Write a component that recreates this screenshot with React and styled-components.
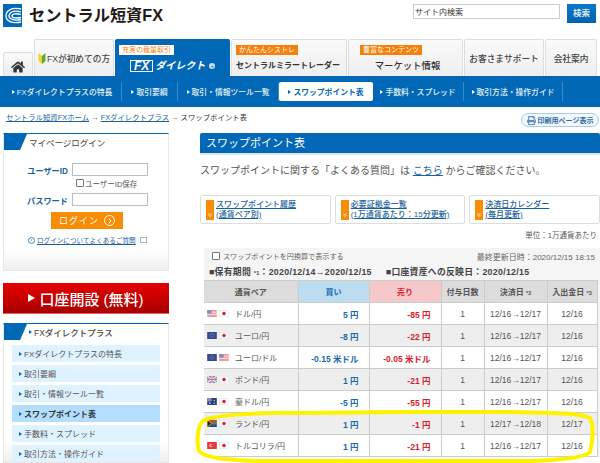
import React from "react";
import styled, { createGlobalStyle } from "styled-components";
import { FaHome, FaPrint } from "react-icons/fa";
import { ChevronRight, ChevronsDown } from "lucide-react";

const blue = "#0068b7";
const linkBlue = "#1a5f9e";
const font = `"Liberation Sans", "Noto Sans CJK JP", sans-serif`;

const Global = createGlobalStyle`
  html, body { margin: 0; padding: 0; background: #fff; overflow: hidden; }
  body { font-family: ${font}; color: #444; }
  * { box-sizing: border-box; }
  a { color: ${linkBlue}; }
`;

const navItems = [
  { label: "FXダイレクトプラスの特長", w: 119 },
  { label: "取引要綱", w: 56 },
  { label: "取引・情報ツール一覧", w: 101 },
  { label: "スワップポイント表", w: 94, active: true },
  { label: "手数料・スプレッド", w: 91 },
  { label: "取引方法・操作ガイド", w: 99 },
];

const sideItems = ["FXダイレクトプラスの特長", "取引要綱", "取引・情報ツール一覧", "スワップポイント表", "手数料・スプレッド", "取引方法・操作ガイド"];

const rows = [
  { flags: ["us", "jp"], pair: "ドル/円", buy: "5 円", sell: "-85 円", settle: "12/16→12/17", date: "12/16" },
  { flags: ["eu", "jp"], pair: "ユーロ/円", buy: "-8 円", sell: "-22 円", settle: "12/16→12/17", date: "12/16" },
  { flags: ["eu", "us"], pair: "ユーロ/ドル", buy: "-0.15 米ドル", sell: "-0.05 米ドル", settle: "12/16→12/17", date: "12/16" },
  { flags: ["gb", "jp"], pair: "ポンド/円", buy: "1 円", sell: "-21 円", settle: "12/16→12/17", date: "12/16" },
  { flags: ["au", "jp"], pair: "豪ドル/円", buy: "-5 円", sell: "-55 円", settle: "12/16→12/17", date: "12/16" },
  { flags: ["za", "jp"], pair: "ランド/円", buy: "1 円", sell: "-1 円", settle: "12/17→12/18", date: "12/17" },
  { flags: ["tr", "jp"], pair: "トルコリラ/円", buy: "1 円", sell: "-21 円", settle: "12/16→12/17", date: "12/16" },
];

const Flag = ({ code }) => (
  <FlagSvg viewBox="0 0 11 8">
    {code === "jp" && (
      <>
        <rect x="0.25" y="0.25" width="10.5" height="7.5" fill="#fafafa" stroke="#ddd" strokeWidth="0.5" />
        <circle cx="5.5" cy="4" r="2" fill="#d8202c" />
      </>
    )}
    {code === "us" && (
      <>
        <rect width="11" height="8" fill="#ee9a9a" />
        <rect y="2" width="11" height="1" fill="#fbeaea" />
        <rect y="4.5" width="11" height="1" fill="#fbeaea" />
        <rect width="5" height="4" fill="#7f8fc4" />
      </>
    )}
    {code === "eu" && (
      <>
        <rect width="11" height="8" fill="#35489c" />
        <circle cx="5.5" cy="4" r="2" fill="none" stroke="#9a9a60" strokeWidth="0.6" />
      </>
    )}
    {code === "gb" && (
      <>
        <rect width="11" height="8" fill="#7a8cc0" />
        <path d="M0 0L11 8M11 0L0 8" stroke="#eee" strokeWidth="1.4" />
        <path d="M5.5 0V8M0 4H11" stroke="#eee" strokeWidth="2" />
        <path d="M5.5 0V8M0 4H11" stroke="#d45a6a" strokeWidth="1" />
      </>
    )}
    {code === "au" && (
      <>
        <rect width="11" height="8" fill="#2c3f80" />
        <rect width="5" height="4" fill="#8a8fb8" />
        <circle cx="8" cy="3" r="0.7" fill="#eee" />
        <circle cx="8" cy="6" r="0.7" fill="#eee" />
        <circle cx="3" cy="6" r="0.9" fill="#eee" />
      </>
    )}
    {code === "za" && (
      <>
        <rect width="11" height="4" fill="#d0443c" />
        <rect y="4" width="11" height="4" fill="#2c4a9c" />
        <path d="M4 4H11" stroke="#3a9a50" strokeWidth="2" />
        <path d="M0 0L5 4L0 8Z" fill="#222" stroke="#e8c830" strokeWidth="0.8" />
      </>
    )}
    {code === "tr" && (
      <>
        <rect width="11" height="8" fill="#e8353a" />
        <circle cx="4.5" cy="4" r="2" fill="#fff" />
        <circle cx="5.1" cy="4" r="1.5" fill="#e8353a" />
      </>
    )}
  </FlagSvg>
);

const App = () => {
  return (
    <Page>
      <Global />
      <Header>
        <Logo>
          <LogoMark viewBox="0 0 19 23">
            <rect width="19" height="23" fill={blue} />
            <path d="M18 5C8 3 3 7 3 12C3 17 9 20 18 18" fill="none" stroke="#fff" strokeWidth="1.3" />
            <path d="M18 8C11 6 6 8 6 12C6 15 11 17 18 15.5" fill="none" stroke="#fff" strokeWidth="1.3" />
            <path d="M18 10.5C13 9 9 10 9 12C9 14 13 14.5 18 13.5" fill="none" stroke="#fff" strokeWidth="1.3" />
          </LogoMark>
          <LogoText>セントラル短資FX</LogoText>
        </Logo>
        <SearchBox>
          <SearchInput defaultValue="サイト内検索" />
          <SearchButton>検索</SearchButton>
        </SearchBox>
      </Header>

      <Tabs>
        <HomeTab>
          <FaHome size={14} color="#333" />
        </HomeTab>
        <Tab $w={80}>
          <Leaf viewBox="0 0 8 12">
            <path d="M4 12L0.5 9V1L4 4Z" fill="#f2d320" />
            <path d="M4 12L7.5 9V1L4 4Z" fill="#5aa83c" />
          </Leaf>
          FXが初めての方
        </Tab>
        <ActiveTab>
          <Badge $white>充実の裁量取引</Badge>
          <BrandRow>
            <BrandFx>FX</BrandFx>
            <BrandName>ダイレクト</BrandName>
            <BrandPlus>+</BrandPlus>
          </BrandRow>
        </ActiveTab>
        <StackTab $w={116}>
          <Badge>かんたんシストレ</Badge>
          <StackTitle $bold>セントラルミラートレーダー</StackTitle>
        </StackTab>
        <StackTab $w={115}>
          <Badge $indent={7}>豊富なコンテンツ</Badge>
          <StackTitle>マーケット情報</StackTitle>
        </StackTab>
        <Tab $w={80}>お客さまサポート</Tab>
        <Tab $w={52}>会社案内</Tab>
      </Tabs>

      <Nav>
        {navItems.map((item) => (
          <NavCell key={item.label} $w={item.w} $active={item.active}>
            <NavLabel $active={item.active}>
              <Arrow $color={item.active ? blue : "#fff"} />
              {item.label}
            </NavLabel>
          </NavCell>
        ))}
      </Nav>

      <Crumbs>
        <CrumbText>
          <a href="#home">セントラル短資FXホーム</a> → <a href="#fx">FXダイレクトプラス</a> → スワップポイント表
        </CrumbText>
        <PrintButton>
          <FaPrint size={9} color="#5a8fc0" />
          印刷用ページ表示
        </PrintButton>
      </Crumbs>

      <Columns>
        <Sidebar>
          <SideBox $h={138}>
            <SideHeading>
              <Corner />
              マイページログイン
            </SideHeading>
            <LoginRow>
              <LoginLabel>ユーザーID</LoginLabel>
              <LoginInput />
            </LoginRow>
            <SaveRow>
              <SaveBox />
              ユーザーID保存
            </SaveRow>
            <LoginRow>
              <LoginLabel>パスワード</LoginLabel>
              <LoginInput />
            </LoginRow>
            <LoginButton>
              ログイン
              <LoginCircle>
                <ChevronRight size={8} strokeWidth={3} />
              </LoginCircle>
            </LoginButton>
            <HelpRow>
              <HelpCircle>
                <ChevronRight size={6} strokeWidth={3} />
              </HelpCircle>
              <a href="#faq">ログインについてよくあるご質問</a>
              <Popup />
            </HelpRow>
          </SideBox>

          <OpenAccount>
            <OpenArrow />
            口座開設 (無料)
          </OpenAccount>

          <SideBox>
            <SideHeading $menu>
              <Corner />
              <Arrow $color={blue} />
              FXダイレクトプラス
            </SideHeading>
            <SideList>
              {sideItems.map((label, i) => (
                <SideItem key={label} $active={i === 3}>
                  <Arrow $color={blue} />
                  {label}
                </SideItem>
              ))}
            </SideList>
          </SideBox>
        </Sidebar>

        <Main>
          <Title>スワップポイント表</Title>
          <Intro>
            スワップポイントに関する「よくある質問」は <a href="#here">こちら</a> からご確認ください。
          </Intro>
          <Cards>
            <Card>
              <CardTag>
                <ChevronsDown size={6} strokeWidth={3} color="#fff" />
              </CardTag>
              <a href="#history">スワップポイント履歴<br />(通貨ペア別)</a>
            </Card>
            <Card>
              <CardTag>
                <ChevronsDown size={6} strokeWidth={3} color="#fff" />
              </CardTag>
              <a href="#margin">必要証拠金一覧<br />(1万通貨あたり：15分更新)</a>
            </Card>
            <Card>
              <CardTag>
                <ChevronsDown size={6} strokeWidth={3} color="#fff" />
              </CardTag>
              <a href="#calendar">決済日カレンダー<br />(毎月更新)</a>
            </Card>
          </Cards>
          <Unit>単位：1万通貨あたり</Unit>
          <TablePanel>
            <OptionRow>
              <YenCheck>
                <SaveBox />
                スワップポイントを円換算で表示する
              </YenCheck>
              <Updated>最終更新日時：2020/12/15 18:15</Updated>
            </OptionRow>
            <PeriodRow>
              <span>■保有期間 <Note>*1</Note>：2020/12/14→2020/12/15</span>
              <span>■口座資産への反映日：2020/12/15</span>
            </PeriodRow>
            <Table>
              <colgroup>
                <col style={{ width: 94 }} />
                <col style={{ width: 71 }} />
                <col style={{ width: 72 }} />
                <col style={{ width: 43 }} />
                <col style={{ width: 63 }} />
                <col style={{ width: 50 }} />
              </colgroup>
              <thead>
                <tr>
                  <Th>通貨ペア</Th>
                  <Th $bg="#bcdcf0" $color="#1a6ab0">買い</Th>
                  <Th $bg="#f6c8ca" $color="#d8202c">売り</Th>
                  <Th>付与日数</Th>
                  <Th>決済日 <Note>*2</Note></Th>
                  <Th>入出金日 <Note>*3</Note></Th>
                </tr>
              </thead>
              <tbody>
                {rows.map((row, i) => (
                  <Row key={row.pair} $even={i % 2 === 1}>
                    <PairCell>
                      <PairInner>
                        <FlagGroup>
                          {row.flags.map((code) => (
                            <Flag key={code} code={code} />
                          ))}
                        </FlagGroup>
                        {row.pair}
                      </PairInner>
                    </PairCell>
                    <ValueCell $color="#1a6ab0">{row.buy}</ValueCell>
                    <ValueCell $color="#d8202c">{row.sell}</ValueCell>
                    <Td>1</Td>
                    <Td>{row.settle}</Td>
                    <Td>{row.date}</Td>
                  </Row>
                ))}
              </tbody>
            </Table>
          </TablePanel>
        </Main>
      </Columns>

      <Highlight viewBox="0 0 600 463">
        <path
          d="M400 412L300 413C250 412 215 416 204 420C196 426 197 445 199 451C205 458 225 460 260 461L530 461C560 460 585 458 590 452C593 440 594 425 590 418C575 412 550 413 510 412Z"
          fill="none"
          stroke="#fff200"
          strokeWidth="4"
        />
      </Highlight>
    </Page>
  );
};

const Page = styled.div`
  position: relative;
  width: 600px;
  height: 463px;
  overflow: hidden;
`;
const Header = styled.div`
  display: flex;
  justify-content: space-between;
  height: 39px;
  padding: 4px 4px 0 3px;
`;
const Logo = styled.div`
  display: flex;
  align-items: flex-start;
  gap: 7px;
`;
const LogoMark = styled.svg`
  width: 19px;
  height: 23px;
`;
const LogoText = styled.div`
  font-size: 16.2px;
  font-weight: 700;
  color: #231815;
  line-height: 23px;
  white-space: nowrap;
`;
const SearchBox = styled.div`
  display: flex;
  gap: 7px;
  align-items: flex-start;
`;
const SearchInput = styled.input`
  width: 147px;
  height: 15px;
  border: 1px solid #ccc;
  padding: 0 1px;
  font-size: 8px;
  font-family: ${font};
  color: #333;
`;
const SearchButton = styled.div`
  width: 29px;
  height: 19px;
  background: linear-gradient(#0a78c8, #0062ac);
  color: #dbeaf5;
  font-size: 8.5px;
  font-weight: 700;
  text-align: center;
  line-height: 19px;
`;
const Tabs = styled.div`
  display: flex;
  align-items: flex-end;
  gap: 1px;
  height: 37px;
  padding-left: 3px;
`;
const Tab = styled.div`
  display: flex;
  align-items: center;
  justify-content: center;
  gap: 1px;
  width: ${(p) => p.$w}px;
  height: 37px;
  border: 1px solid #ddd;
  border-bottom: 0;
  border-radius: 2px 2px 0 0;
  background: linear-gradient(#fafafa, #eeeeee);
  color: #444;
  font-size: 8.7px;
  font-weight: 500;
  white-space: nowrap;
`;
const HomeTab = styled(Tab)`
  width: 30px;
  height: 24px;
  padding-top: 4px;
`;
const Leaf = styled.svg`
  width: 8px;
  height: 12px;
  flex: none;
`;
const ActiveTab = styled.div`
  width: 115px;
  height: 37px;
  background: ${blue};
  border-radius: 2px 2px 0 0;
  padding: 6px 0 0 4px;
`;
const Badge = styled.div`
  width: fit-content;
  height: 10px;
  margin-left: ${(p) => p.$indent || 0}px;
  padding: 0 3px;
  background: ${(p) => (p.$white ? "#fff" : "#f5800a")};
  color: ${(p) => (p.$white ? "#f5800a" : "#fff")};
  font-size: 7px;
  line-height: 10px;
  white-space: nowrap;
`;
const BrandRow = styled.div`
  display: flex;
  align-items: center;
  gap: 2px;
  margin: 5px 0 0 11px;
  color: #fff;
`;
const BrandFx = styled.span`
  border: 1px solid #fff;
  font-size: 12px;
  font-weight: 700;
  font-style: italic;
  line-height: 10px;
  padding: 0 3px;
`;
const BrandName = styled.span`
  font-size: 10px;
  font-weight: 700;
  font-style: italic;
  line-height: 12px;
`;
const BrandPlus = styled.span`
  width: 6px;
  height: 6px;
  margin-left: 2px;
  border-radius: 50%;
  background: #cfe3f3;
  color: ${blue};
  font-size: 6px;
  line-height: 6px;
  text-align: center;
`;
const StackTab = styled.div`
  width: ${(p) => p.$w}px;
  height: 37px;
  border: 1px solid #ddd;
  border-bottom: 0;
  border-radius: 2px 2px 0 0;
  background: linear-gradient(#fafafa, #eeeeee);
  padding: 5px 0 0 4px;
`;
const StackTitle = styled.div`
  margin-top: 5px;
  font-size: ${(p) => (p.$bold ? 8 : 9.4)}px;
  font-weight: ${(p) => (p.$bold ? 700 : 500)};
  line-height: 12px;
  color: #333;
  white-space: nowrap;
  text-align: ${(p) => (p.$bold ? "left" : "center")};
`;
const Nav = styled.div`
  display: flex;
  align-items: center;
  height: 31px;
  padding-left: 3px;
  background: ${blue};
`;
const NavCell = styled.div`
  width: ${(p) => p.$w}px;
  height: 19px;
  display: flex;
  align-items: center;
  justify-content: center;
  border-right: ${(p) => (p.$active ? "0" : "1px solid #3a8ac6")};
  white-space: nowrap;
`;
const NavLabel = styled.div`
  display: flex;
  align-items: center;
  justify-content: center;
  gap: 2px;
  width: 100%;
  height: 19px;
  border-radius: 2px;
  background: ${(p) => (p.$active ? "#fff" : "transparent")};
  color: ${(p) => (p.$active ? blue : "#e6f1f9")};
  font-size: 7.8px;
  font-weight: ${(p) => (p.$active ? 700 : 500)};
`;
const Arrow = styled.i`
  display: inline-block;
  flex: none;
  width: 0;
  height: 0;
  border-left: 3px solid ${(p) => p.$color};
  border-top: 2.5px solid transparent;
  border-bottom: 2.5px solid transparent;
`;
const Crumbs = styled.div`
  display: flex;
  justify-content: space-between;
  align-items: flex-start;
  height: 26px;
  padding: 5px 1px 0 6px;
`;
const CrumbText = styled.div`
  font-size: 7.4px;
  line-height: 12px;
  color: #333;
  white-space: nowrap;
`;
const PrintButton = styled.div`
  display: flex;
  align-items: center;
  justify-content: center;
  gap: 2px;
  width: 78px;
  height: 14px;
  margin-top: 1px;
  border: 1px solid #a8cbe6;
  border-radius: 7px;
  background: #f2f8fd;
  color: #2a6aa8;
  font-size: 7px;
  font-weight: 700;
  white-space: nowrap;
`;
const Columns = styled.div`
  display: flex;
  padding-left: 3px;
  gap: 31px;
`;
const Sidebar = styled.div`
  width: 166px;
  flex: none;
  display: flex;
  flex-direction: column;
`;
const SideBox = styled.div`
  ${(p) => (p.$h ? `height: ${p.$h}px;` : "")}
  border: 1px solid #e6e6e6;
  border-top: 1px solid ${blue};
  background: linear-gradient(#fff 85%, #efefef);
`;
const SideHeading = styled.div`
  display: flex;
  align-items: center;
  gap: 2px;
  height: 16px;
  font-size: 8.5px;
  color: #444;
  white-space: nowrap;
  font-weight: ${(p) => (p.$menu ? 500 : 400)};
  margin-bottom: ${(p) => (p.$menu ? 5 : 13)}px;
`;
const Corner = styled.i`
  display: block;
  width: 23px;
  height: 16px;
  background: ${blue};
  clip-path: polygon(0 0, 100% 0, 70% 100%, 0 100%);
`;
const LoginRow = styled.div`
  display: flex;
  align-items: center;
  justify-content: flex-end;
  gap: 4px;
  padding-right: 20px;
`;
const LoginLabel = styled.div`
  color: ${linkBlue};
  font-size: 8.2px;
  font-weight: 700;
  white-space: nowrap;
`;
const LoginInput = styled.div`
  width: 76px;
  height: 13px;
  border: 1px solid #b8bec4;
  background: #fff;
`;
const SaveRow = styled.div`
  display: flex;
  align-items: center;
  gap: 1px;
  height: 14px;
  margin-bottom: 3px;
  padding-left: 72px;
  font-size: 7.5px;
  color: #555;
  white-space: nowrap;
`;
const SaveBox = styled.i`
  display: block;
  flex: none;
  width: 8px;
  height: 8px;
  border: 1px solid #777;
  border-radius: 1px;
  background: #fff;
`;
const LoginButton = styled.div`
  display: flex;
  align-items: center;
  justify-content: center;
  gap: 5px;
  width: 72px;
  height: 17px;
  margin: 6px 0 0 47px;
  background: #f98c05;
  color: #fff;
  font-size: 9px;
  letter-spacing: 1px;
`;
const LoginCircle = styled.span`
  display: flex;
  align-items: center;
  justify-content: center;
  width: 11px;
  height: 11px;
  border: 1px solid #fff;
  border-radius: 50%;
`;
const HelpRow = styled.div`
  display: flex;
  align-items: center;
  gap: 2px;
  margin: 6px 0 0 24px;
  font-size: 6.6px;
  white-space: nowrap;
`;
const HelpCircle = styled.span`
  display: flex;
  align-items: center;
  justify-content: center;
  width: 7px;
  height: 7px;
  border: 1px solid #3a8ac6;
  border-radius: 50%;
  color: #3a8ac6;
`;
const Popup = styled.i`
  display: block;
  width: 7px;
  height: 6px;
  margin-left: 2px;
  border: 1px solid #9ab8d0;
`;
const OpenAccount = styled.div`
  display: flex;
  align-items: center;
  justify-content: center;
  gap: 4px;
  height: 31px;
  margin: 12px 0 9px;
  background: linear-gradient(#e60000, #a80000);
  border-bottom: 1px solid #e06060;
  color: #fff;
  font-size: 15px;
  font-weight: 500;
  white-space: nowrap;
`;
const OpenArrow = styled.i`
  width: 0;
  height: 0;
  border-left: 7px solid #fff;
  border-top: 4.5px solid transparent;
  border-bottom: 4.5px solid transparent;
`;
const SideList = styled.div`
  display: flex;
  flex-direction: column;
  gap: 3px;
  padding: 0 8px;
`;
const SideItem = styled.div`
  display: flex;
  align-items: center;
  gap: 2px;
  height: 17px;
  padding-left: 7px;
  background: ${(p) => (p.$active ? "#b3deff" : "#dff2ff")};
  font-size: 8px;
  font-weight: ${(p) => (p.$active ? 700 : 400)};
  color: ${(p) => (p.$active ? "#333" : "#555")};
  white-space: nowrap;
`;
const Main = styled.div`
  flex: 1;
  min-width: 0;
`;
const Title = styled.div`
  height: 22px;
  padding-left: 6px;
  border-radius: 2px 2px 0 0;
  background: ${blue};
  border-bottom: 2px solid #d8e8f4;
  color: #fff;
  font-size: 11px;
  line-height: 20px;
`;
const Intro = styled.div`
  margin-top: 8px;
  height: 27px;
  font-size: 10px;
  line-height: 16px;
  color: #555;
  white-space: nowrap;
`;
const Cards = styled.div`
  display: flex;
  gap: 4px;
  margin-top: 5px;
`;
const Card = styled.div`
  display: flex;
  align-items: center;
  gap: 2px;
  flex: 1;
  height: 29px;
  padding-left: 5px;
  border: 1px solid #ddd;
  border-radius: 2px;
  font-size: 8px;
  line-height: 10px;
  white-space: nowrap;
  font-weight: 500;
`;
const CardTag = styled.i`
  display: flex;
  align-items: flex-end;
  justify-content: center;
  flex: none;
  width: 8px;
  height: 20px;
  padding-bottom: 2px;
  background: #f98c05;
`;
const Unit = styled.div`
  height: 24px;
  padding: 6px 3px 0 0;
  text-align: right;
  font-size: 7.5px;
  line-height: 12px;
  color: #555;
`;
const TablePanel = styled.div`
  margin-left: 4px;
  padding: 0 3px 0 0;
  background: #f5f5f5;
`;
const OptionRow = styled.div`
  display: flex;
  justify-content: space-between;
  align-items: center;
  height: 16px;
  padding: 0 2px 0 8px;
  font-size: 7.1px;
  color: #666;
  white-space: nowrap;
`;
const YenCheck = styled.span`
  display: flex;
  align-items: center;
  gap: 3px;
`;
const Updated = styled.span`
  font-size: 8px;
`;
const PeriodRow = styled.div`
  display: flex;
  gap: 14px;
  height: 16px;
  padding: 3px 0 0 5px;
  font-size: 8.8px;
  letter-spacing: 0.3px;
  line-height: 10px;
  font-weight: 700;
  color: #444;
  white-space: nowrap;
`;
const Note = styled.span`
  font-size: 5.5px;
`;
const Table = styled.table`
  width: 393px;
  table-layout: fixed;
  border-collapse: collapse;
  font-size: 8.5px;
`;
const Th = styled.th`
  height: 22px;
  padding: 0;
  border: 1px solid #ccc;
  border-left: 0;
  background: ${(p) => p.$bg || "#dcdcdc"};
  color: ${(p) => p.$color || "#555"};
  font-size: 8px;
  font-weight: 700;
  white-space: nowrap;
`;
const Row = styled.tr`
  height: 22px;
  background: ${(p) => (p.$even ? "#eeeeee" : "#fff")};
`;
const Td = styled.td`
  padding: 0;
  border: 1px solid #ccc;
  border-left: 0;
  text-align: center;
  color: #555;
  white-space: nowrap;
`;
const PairCell = styled(Td)`
  text-align: left;
`;
const PairInner = styled.div`
  display: flex;
  align-items: center;
  gap: 6px;
  padding-left: 3px;
  font-size: 8px;
`;
const FlagGroup = styled.span`
  display: flex;
  gap: 2px;
`;
const FlagSvg = styled.svg`
  display: block;
  width: 10px;
  height: 7px;
`;
const ValueCell = styled(Td)`
  padding-right: 10px;
  text-align: right;
  font-weight: 700;
  color: ${(p) => p.$color};
`;
const Highlight = styled.svg`
  position: absolute;
  top: 0;
  left: 0;
  width: 600px;
  height: 463px;
  pointer-events: none;
`;

export default App;
